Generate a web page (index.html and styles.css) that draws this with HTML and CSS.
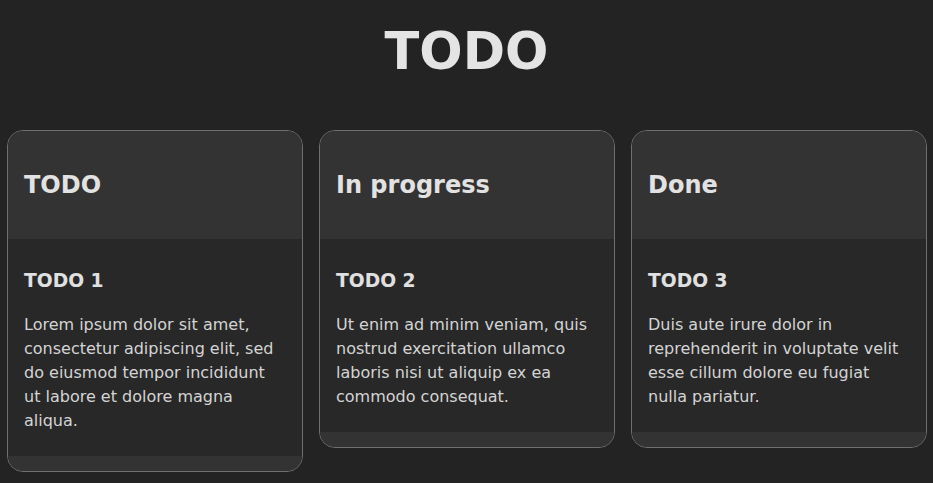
FILE: index.html
```
<!DOCTYPE html>
<html lang="en">
<head>
<meta charset="utf-8">
<title>TODO</title>
<link rel="stylesheet" href="styles.css">
</head>
<body>
<h1 class="title">TODO</h1>
<main class="board">
  <section class="column">
    <header class="column-head"><h2>TODO</h2></header>
    <div class="column-body">
      <h3>TODO 1</h3>
      <p>Lorem ipsum dolor sit amet, consectetur adipiscing elit, sed do eiusmod tempor incididunt ut labore et dolore magna aliqua.</p>
    </div>
    <footer class="column-foot"></footer>
  </section>
  <section class="column">
    <header class="column-head"><h2>In progress</h2></header>
    <div class="column-body">
      <h3>TODO 2</h3>
      <p>Ut enim ad minim veniam, quis nostrud exercitation ullamco laboris nisi ut aliquip ex ea commodo consequat.</p>
    </div>
    <footer class="column-foot"></footer>
  </section>
  <section class="column">
    <header class="column-head"><h2>Done</h2></header>
    <div class="column-body">
      <h3>TODO 3</h3>
      <p>Duis aute irure dolor in reprehenderit in voluptate velit esse cillum dolore eu fugiat nulla pariatur.</p>
    </div>
    <footer class="column-foot"></footer>
  </section>
</main>
</body>
</html>
```
FILE: styles.css
```
html, body {
  margin: 0;
  padding: 0;
}
body {
  background: #232323;
  color: #d6d6d6;
  font-family: "DejaVu Sans", sans-serif;
  font-size: 16px;
  line-height: 1.5;
}
.title {
  margin: 13px 0 39px;
  font-size: 51px;
  line-height: 78px;
  font-weight: bold;
  text-align: center;
  color: #e4e4e4;
}
.board {
  display: grid;
  grid-template-columns: repeat(3, 296px);
  gap: 16px;
  padding: 0 7px;
  align-items: start;
}
.column {
  border: 1px solid #6f6f6f;
  border-radius: 16px;
  overflow: hidden;
  display: flex;
  flex-direction: column;
  background: #282828;
}
.column-head {
  background: #333333;
  padding: 16px;
}
.column-head h2 {
  margin: 19.92px 0;
  font-size: 24px;
  line-height: 36px;
  color: #e2e2e2;
}
.column-body {
  background: #282828;
  padding: 9px 16px 7px;
}
.column-body h3 {
  margin: 18.72px 0;
  font-size: 18.72px;
  line-height: 28px;
  color: #e0e0e0;
}
.column-body p {
  margin: 16px 0;
  color: #d4d4d4;
}
.column-foot {
  background: #333333;
  height: 15px;
}
```
